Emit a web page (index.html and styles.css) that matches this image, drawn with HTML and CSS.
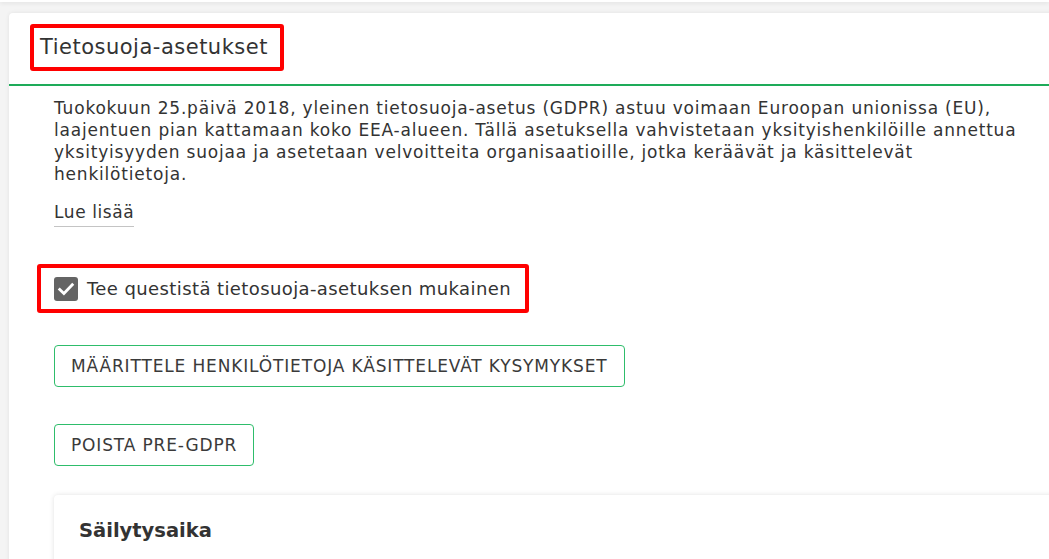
FILE: index.html
```html
<!DOCTYPE html>
<html lang="fi">
<head>
<meta charset="utf-8">
<title>Tietosuoja-asetukset</title>
<link rel="stylesheet" href="styles.css">
</head>
<body>
<div class="prev-card"></div>
<main class="page">
  <section class="card">
    <header class="card-header">
      <h2 class="title highlight">Tietosuoja-asetukset</h2>
    </header>
    <div class="card-body">
      <p class="intro">Tuokokuun 25.päivä 2018, yleinen tietosuoja-asetus (GDPR) astuu voimaan Euroopan unionissa (EU), laajentuen pian kattamaan koko EEA-alueen. Tällä asetuksella vahvistetaan yksityishenkilöille annettua yksityisyyden suojaa ja asetetaan velvoitteita organisaatioille, jotka keräävät ja käsittelevät henkilötietoja.</p>
      <a class="more" href="#">Lue lisää</a>
      <div class="check-row">
        <label class="check highlight">
          <span class="box"><svg viewBox="0 0 24 24" width="20" height="20"><path d="M4.5 12.5l5 5 10-10.5" fill="none" stroke="#fff" stroke-width="3.4" stroke-linecap="square"/></svg></span>
          <span class="check-label">Tee questistä tietosuoja-asetuksen mukainen</span>
        </label>
      </div>
      <div class="actions">
        <button class="btn" type="button">Määrittele henkilötietoja käsittelevät kysymykset</button>
        <button class="btn" type="button">Poista pre-GDPR</button>
      </div>
      <section class="sub-card">
        <h3 class="sub-title">Säilytysaika</h3>
      </section>
    </div>
  </section>
</main>
</body>
</html>
```
FILE: styles.css
```css
html, body {
  margin: 0;
  padding: 0;
}
body {
  background: #f4f4f4;
  font-family: "DejaVu Sans", "Liberation Sans", sans-serif;
  color: #333;
  overflow: hidden;
  height: 559px;
}
.prev-card {
  height: 2px;
  background: #fff;
  box-shadow: 0 1px 4px rgba(0,0,0,0.12);
}
.page {
  padding: 11px 0 0 9px;
}
.card {
  background: #fff;
  border-radius: 4px;
  box-shadow: 0 0 4px rgba(0,0,0,0.08);
  width: 1100px;
  height: 600px;
}
.card-header {
  height: 73px;
  box-sizing: border-box;
  padding: 11px 0 0 21px;
  border-bottom: 2px solid #1eab59;
}
.highlight {
  border: 4px solid #ff0000;
  border-radius: 3px;
}
.title {
  display: inline-block;
  margin: 0;
  font-size: 21px;
  font-weight: 400;
  line-height: 39px;
  padding: 0 12px 0 6px;
  letter-spacing: 0.5px;
}
.card-body {
  padding: 11px 0 0 45px;
}
.intro {
  margin: 0;
  width: 978px;
  font-size: 17px;
  line-height: 22px;
  letter-spacing: 0.8px;
}
.more {
  display: inline-block;
  margin-top: 16px;
  color: #333;
  text-decoration: none;
  font-size: 17px;
  line-height: 22px;
  padding-bottom: 3px;
  border-bottom: 1px solid #c4c4c4;
  letter-spacing: 0.6px;
}
.check-row {
  margin: 37px 0 0 -17px;
}
.check {
  display: inline-flex;
  align-items: center;
  gap: 9px;
  padding: 9px 14px 8px 13px;
}
.box {
  width: 24px;
  height: 24px;
  border-radius: 3px;
  background: #646464;
  display: flex;
  align-items: center;
  justify-content: center;
}
.check-label {
  font-size: 18px;
  line-height: 24px;
  letter-spacing: 0.4px;
}
.actions {
  display: flex;
  flex-direction: column;
  align-items: flex-start;
  gap: 37px;
  margin-top: 32px;
}
.btn {
  font-family: inherit;
  font-size: 17px;
  text-transform: uppercase;
  color: #3a3a3a;
  background: #fff;
  border: 1px solid #2ebd6b;
  border-radius: 4px;
  height: 42px;
  padding: 0 16px;
  letter-spacing: 0.85px;
}
.sub-card {
  margin-top: 29px;
  background: #fff;
  border-radius: 4px;
  box-shadow: 0 0 5px rgba(0,0,0,0.12);
  padding: 22px 25px;
  height: 200px;
}
.sub-title {
  margin: 0;
  font-size: 19.5px;
  font-weight: 700;
  line-height: 28px;
}
```
